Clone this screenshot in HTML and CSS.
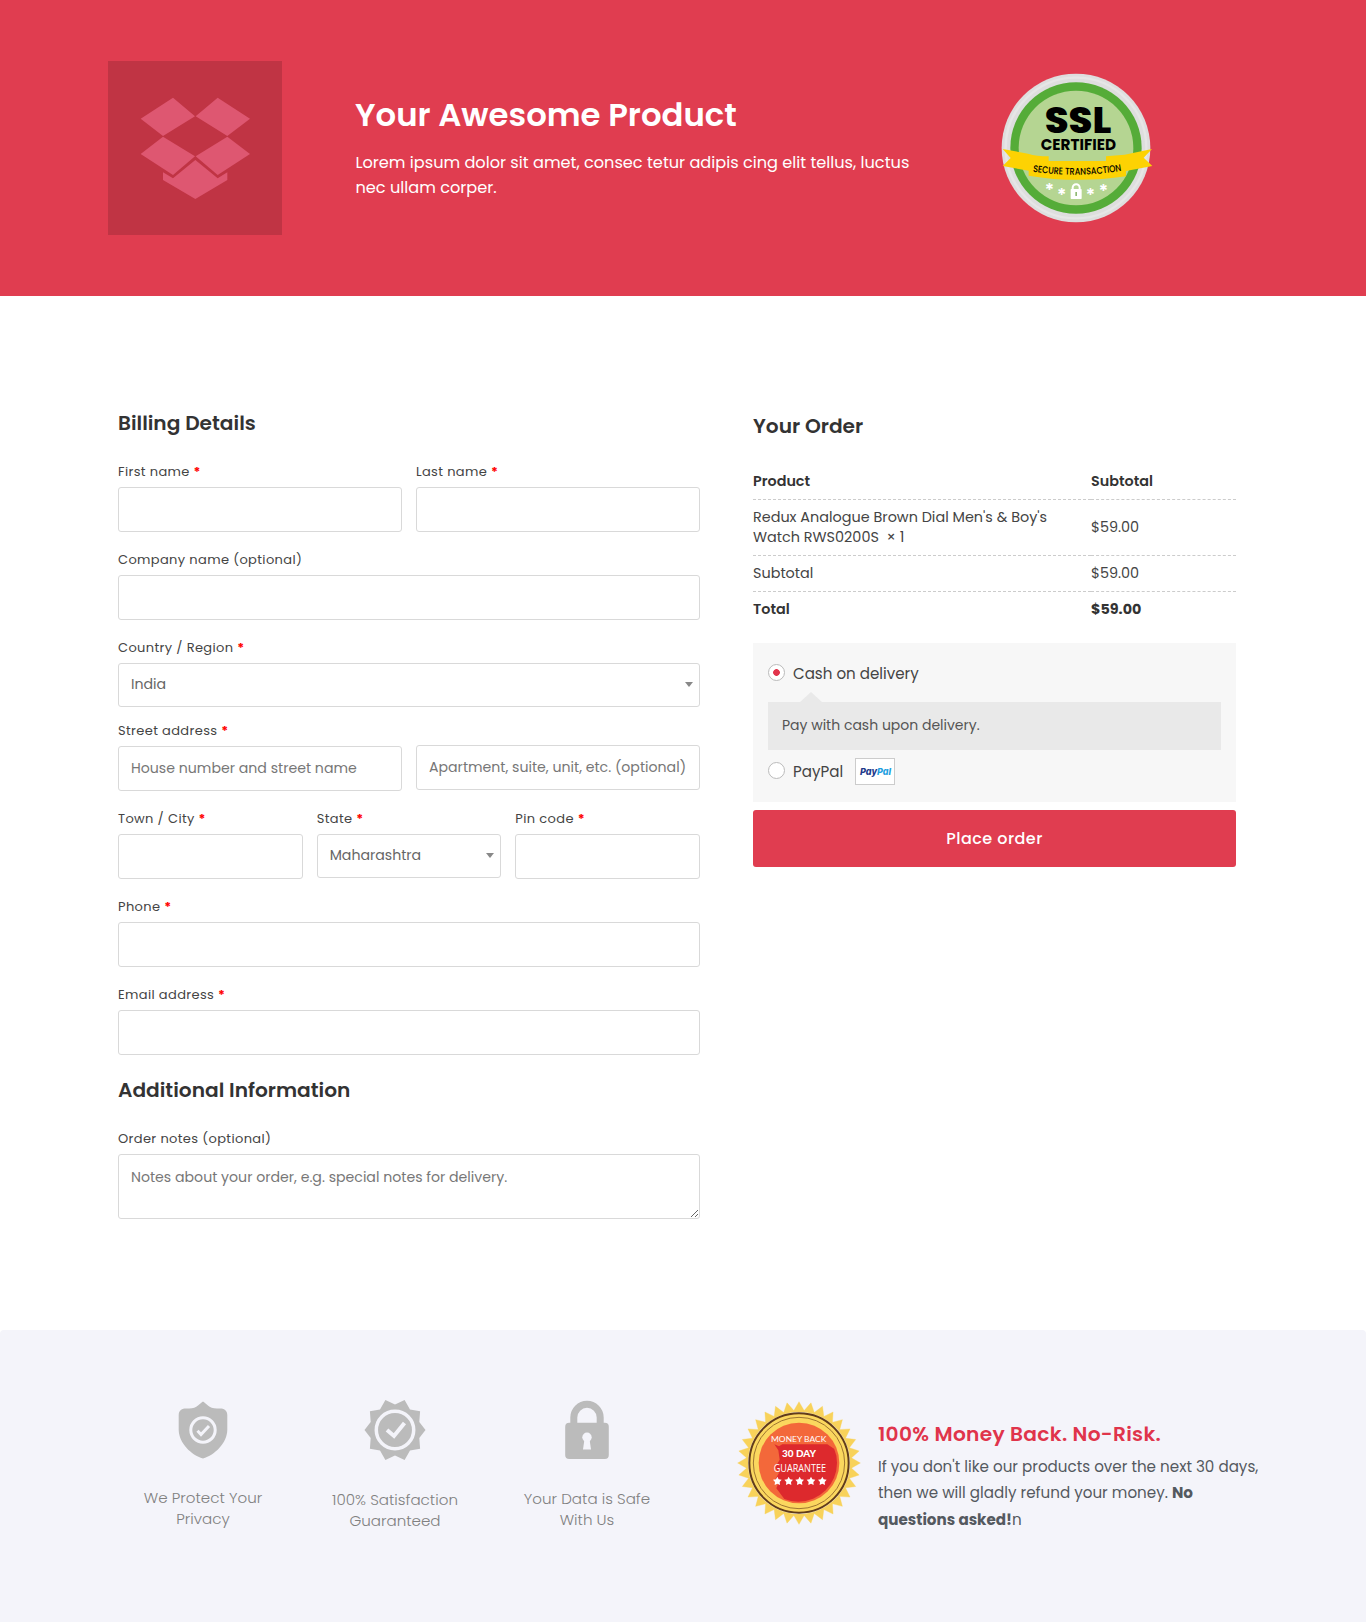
FILE: index.html
```html
<!DOCTYPE html>
<html lang="en">
<head>
<meta charset="utf-8">
<title>Checkout</title>
<link rel="stylesheet" href="styles.css">
</head>
<body>
<header class="hero">
  <svg class="product-logo" viewBox="0 0 522 522" aria-label="Product logo">
    <rect width="522" height="522" fill="#c03444"/>
    <g fill="#de5771">
      <path d="M195 110 261 166 165 225 98 173Z"/>
      <path d="M329 110 426 173 358 225 263 166Z"/>
      <path d="M165 227 261 286 195 342 98 279Z"/>
      <path d="M358 227 426 279 329 342 263 286Z"/>
      <path d="M262 297 329 352 358 334V357L262 414 165 357V334L195 352Z"/>
    </g>
  </svg>
  <div class="hero-text">
    <h1>Your Awesome Product</h1>
    <p>Lorem ipsum dolor sit amet, consec tetur adipis cing elit tellus, luctus<br>nec ullam corper.</p>
  </div>
  <svg class="ssl" viewBox="0 0 600 570" aria-label="SSL certified">
    <circle cx="288" cy="279" r="223" fill="#dedede"/>
    <circle cx="288" cy="279" r="211" fill="none" stroke="#e6e6e6" stroke-width="7"/>
    <circle cx="288" cy="279" r="197" fill="#55ac38"/>
    <circle cx="288" cy="279" r="172" fill="#b5d592"/>
    <path d="M68 282 144 296Q170 304 206 304V318H378V304L434 299 516 282 491 308 517 333 438 348V364Q288 386 146 362V347L68 333 92 309Z" fill="#fdd203"/>
    <path id="ribbon" d="M158 350Q292 370 428 347" fill="none"/>
    <text class="ssl-big" x="194" y="234" textLength="200" lengthAdjust="spacingAndGlyphs">SSL</text>
    <text class="ssl-mid" x="182" y="285" textLength="226" lengthAdjust="spacingAndGlyphs">CERTIFIED</text>
    <text class="ssl-small"><textPath href="#ribbon" textLength="268" lengthAdjust="spacingAndGlyphs">SECURE TRANSACTION</textPath></text>
    <g class="stars-white">
      <text x="208" y="406">✱</text><text x="245" y="419">✱</text><text x="331" y="419">✱</text><text x="370" y="408">✱</text>
    </g>
    <path d="M278 404V398A10.500 10.500 0 0 1 299 398V404" fill="none" stroke="#fff" stroke-width="6"/>
    <rect x="272" y="402" width="33" height="30" rx="2" fill="#fff"/>
    <path d="M288.500 411V423" stroke="#8fb974" stroke-width="5"/>
  </svg>
</header>

<main class="checkout">
  <form class="billing">
    <h2 class="t-billing">Billing Details</h2>
    <div class="row">
      <label class="field"><span class="label">First name <b>*</b></span><input type="text"></label>
      <label class="field"><span class="label">Last name <b>*</b></span><input type="text"></label>
    </div>
    <div class="row">
      <label class="field"><span class="label">Company name (optional)</span><input type="text"></label>
    </div>
    <div class="row row-country">
      <label class="field"><span class="label">Country / Region <b>*</b></span><span class="select"><select><option>India</option></select></span></label>
    </div>
    <div class="row">
      <label class="field"><span class="label">Street address <b>*</b></span><input type="text" placeholder="House number and street name"></label>
      <label class="field unlabelled"><input type="text" placeholder="Apartment, suite, unit, etc. (optional)"></label>
    </div>
    <div class="row">
      <label class="field"><span class="label">Town / City <b>*</b></span><input type="text"></label>
      <label class="field"><span class="label">State <b>*</b></span><span class="select"><select><option>Maharashtra</option></select></span></label>
      <label class="field"><span class="label">Pin code <b>*</b></span><input type="text"></label>
    </div>
    <div class="row">
      <label class="field"><span class="label">Phone <b>*</b></span><input type="text"></label>
    </div>
    <div class="row">
      <label class="field"><span class="label">Email address <b>*</b></span><input type="text"></label>
    </div>
    <h2 class="t-additional">Additional Information</h2>
    <label class="field"><span class="label">Order notes (optional)</span><textarea placeholder="Notes about your order, e.g. special notes for delivery."></textarea></label>
  </form>

  <section class="order">
    <h2>Your Order</h2>
    <table>
      <thead><tr><th>Product</th><th>Subtotal</th></tr></thead>
      <tbody>
        <tr class="item"><td>Redux Analogue Brown Dial Men's &amp; Boy's<br>Watch RWS0200S&nbsp; × 1</td><td>$59.00</td></tr>
        <tr><td>Subtotal</td><td>$59.00</td></tr>
        <tr class="total"><th>Total</th><th class="sum">$59.00</th></tr>
      </tbody>
    </table>
    <div class="payment">
      <div class="method"><span class="radio on"></span><span class="name">Cash on delivery</span></div>
      <div class="bubble">Pay with cash upon delivery.</div>
      <div class="method"><span class="radio"></span><span class="name">PayPal</span>
        <svg class="paypal" viewBox="0 0 40 27"><rect x=".5" y=".5" width="39" height="26" fill="#fff" stroke="#ccc"/><text x="5" y="17.300" textLength="17" lengthAdjust="spacingAndGlyphs" fill="#21398a">Pay</text><text x="22" y="17.300" textLength="14" lengthAdjust="spacingAndGlyphs" fill="#1f9fe0">Pal</text></svg>
      </div>
    </div>
    <button class="place" type="button">Place order</button>
  </section>
</main>

<footer class="trust">
  <div class="assurance">
    <svg viewBox="-32 -32 64 64" fill="#bbb">
      <path d="M0-28.500C3-27 6-21 15-21.500 20-22 24.300-20.500 24.300-15V0C24 13 12 25 0 28.500-12 25-24 13-24.300 0V-15C-24.300-20.500-20-22-15-21.500-6-21-3-27 0-28.500Z"/>
      <circle r="12.200" fill="none" stroke="#f4f4fa" stroke-width="3"/>
      <path d="M-5.500 .8-2 4.500 6-4" fill="none" stroke="#f4f4fa" stroke-width="3"/>
    </svg>
    <p>We Protect Your<br>Privacy</p>
  </div>
  <div class="assurance second">
    <svg viewBox="-32 -32 64 64" fill="#bbb">
      <path d="M30.500 0 24.300 7.900 25.100 18.700 15 20.600 9.600 30 0 25.500-9.600 30-15 20.600-25.100 18.700-24.300 7.900-30.500 0-24.300-7.900-25.100-18.700-15-20.600-9.600-30 0-25.500 9.600-30 15-20.600 25.100-18.700 24.300-7.900Z"/>
      <circle r="18.700" fill="none" stroke="#f4f4fa" stroke-width="3.500"/>
      <path d="M-8 0-1 6 9.500-7" fill="none" stroke="#f4f4fa" stroke-width="4"/>
    </svg>
    <p>100% Satisfaction<br>Guaranteed</p>
  </div>
  <div class="assurance third">
    <svg viewBox="-32 -32 64 64" fill="#bbb">
      <path d="M-13.200-5V-12.500A13.200 13.200 0 0 1 13.200-12.500V-5" fill="none" stroke="#bbb" stroke-width="7"/>
      <rect x="-21.800" y="-7.300" width="43.600" height="36.300" rx="4"/>
      <circle cy="7.300" r="4.700" fill="#f4f4fa"/><path d="M-2.500 9H2.500L4 19.500H-4Z" fill="#f4f4fa"/>
    </svg>
    <p>Your Data is Safe<br>With Us</p>
  </div>
  <svg class="seal" viewBox="-186 -186 372 372" aria-label="30 day money back guarantee">
    <defs>
      <path id="teeth" d="M0-184 18-153H-18ZM184 0 153 18V-18ZM0 184-18 153H18ZM-184 0-153-18V18Z"/>
      <clipPath id="disc"><circle cx="-2" r="116"/></clipPath>
      <path id="star" d="M0-13 4-5 13-4 7 3 8 12 0 8-8 12-7 3-13-4-4-5Z"/>
    </defs>
    <g fill="#f8d25a" stroke="#f8d25a" stroke-linejoin="round">
      <use href="#teeth"/><use href="#teeth" transform="rotate(11.250)"/><use href="#teeth" transform="rotate(22.500)"/><use href="#teeth" transform="rotate(33.750)"/>
      <use href="#teeth" transform="rotate(45)"/><use href="#teeth" transform="rotate(56.250)"/><use href="#teeth" transform="rotate(67.500)"/><use href="#teeth" transform="rotate(78.750)"/>
    </g>
    <circle r="149" fill="#fbd75e" stroke="#623c19" stroke-width="6"/>
    <circle r="137" fill="none" stroke="#8a6128" stroke-width="2.500"/>
    <circle r="121" fill="#f3683a"/>
    <path clip-path="url(#disc)" d="M-74-56-60-50-50-56H85L140-20V140H-20L-68 76-62 60-72 50-60 30-72 14-58-10-62-38Z" fill="#dd292d"/>
    <g class="seal-text">
      <text x="-84" y="-63" font-size="21" textLength="166" lengthAdjust="spacingAndGlyphs">MONEY BACK</text>
      <text x="-51" y="-17" font-size="30" font-weight="900" textLength="102" lengthAdjust="spacingAndGlyphs">30 DAY</text>
      <text x="-76" y="27" class="narrow" textLength="157" lengthAdjust="spacingAndGlyphs">GUARANTEE</text>
    </g>
    <g fill="#fff"><use href="#star" x="-65" y="54"/><use href="#star" x="-31" y="54"/><use href="#star" x="2" y="54"/><use href="#star" x="36" y="54"/><use href="#star" x="70" y="54"/></g>
  </svg>
  <div class="guarantee">
    <h3>100% Money Back. No-Risk.</h3>
    <p>If you don't like our products over the next 30 days,<br>then we will gladly refund your money. <b>No</b><br><b>questions asked!</b>n</p>
  </div>
</footer>
</body>
</html>
```
FILE: styles.css
```css
* { box-sizing: border-box; }
body {
  margin: 0;
  background: #fff;
  color: #444;
  font-family: Poppins, Inter, "Open Sans", sans-serif;
}
h1, h2, h3, p { margin: 0; }

/* Hero */
.hero {
  display: flex;
  align-items: flex-start;
  height: 296px;
  padding: 55px 108px 0;
  background: #e03d50;
  color: #fff;
}
.product-logo { width: 174px; height: 174px; margin-top: 6px; flex: none; }
.hero-text { width: 560px; margin: 40px 65px 0 73px; flex: none; white-space: nowrap; }
.hero h1 { font-size: 32.3px; line-height: 40px; font-weight: 600; }
.hero p { margin-top: 16px; padding-left: .5px; font-size: 16.17px; line-height: 24.6px; }
.ssl { width: 200px; height: 190px; flex: none; }
.ssl-big { font-size: 108px; font-weight: 800; }
.ssl-mid { font-size: 46px; font-weight: 700; }
.ssl-small { font-size: 29px; font-weight: 500; }
.stars-white { fill: #fff; font: 29px "DejaVu Sans", sans-serif; text-anchor: middle; }

/* Checkout */
.checkout { display: flex; align-items: flex-start; gap: 53px; height: 1034px; padding: 112px 0 0 118px; }
h2 { font-size: 20.17px; line-height: 30px; font-weight: 600; color: #333; }
.billing { width: 582px; }
.t-billing { margin-bottom: 24px; }
.t-additional { margin: 2px 0 24px; }
.row { display: flex; gap: 14px; height: 88px; }
.row-country { height: 83px; }
.field { flex: 1 1 0; min-width: 0; display: flex; flex-direction: column; }
.label { margin-bottom: 5px; font-size: 13px; line-height: 20px; letter-spacing: .36px; color: #444; white-space: nowrap; }
.label b { color: #f00; }
.unlabelled { padding-top: 24px; }
input, select, textarea {
  width: 100%;
  border: 1px solid #d9d9d9;
  border-radius: 3px;
  background: #fff;
  color: #666;
  font: 14.13px/20px Poppins, Inter, "Open Sans", sans-serif;
  padding: 0 12px;
}
input { height: 45px; }
::placeholder { color: #777; opacity: 1; }
.select { position: relative; display: block; }
select { display: block; height: 44px; appearance: none; padding-bottom: 2px; }
.select::after {
  content: "";
  position: absolute;
  right: 7px;
  top: 19px;
  border: 4px solid transparent;
  border-top: 5px solid #888;
  border-bottom: 0;
}
textarea { display: block; height: 65px; padding: 12px; resize: vertical; }

/* Order summary */
.order { width: 483px; padding-top: 3px; }
table { width: 100%; margin-top: 23px; border-spacing: 0; table-layout: fixed; font-size: 14.4px; line-height: 19px; }
th, td { padding: 8px 0; border-bottom: 1px dashed #ccc; text-align: left; }
th { font-weight: 600; color: #333; font-size: 14.35px; }
th:first-child { width: 338px; }
.sum { font-weight: 700; }
.item td { line-height: 19.5px; }
.total th { border-bottom: 0; }
.payment { height: 159px; margin-top: 16px; padding: 15px 15px 0; background: #f7f7f7; }
.method { display: flex; align-items: center; height: 28px; font-size: 15.1px; }
.name { padding-top: 2px; }
.radio { width: 17px; height: 17px; margin-right: 8px; border: 1px solid #bbb; border-radius: 50%; background: #fff; }
.radio.on { background: radial-gradient(circle, #e2354c 3px, #fff 3.7px); }
.bubble {
  position: relative;
  height: 48px;
  margin: 16px 0 6px;
  padding: 0 14px;
  background: #e9e9e9;
  color: #555;
  font-size: 14px;
  line-height: 47px;
}
.bubble::before {
  content: "";
  position: absolute;
  left: 32px;
  top: -10px;
  border: 11px solid transparent;
  border-bottom: 10px solid #e9e9e9;
  border-top: 0;
}
.paypal { width: 40px; height: 27px; margin: 2px 0 0 12px; font: italic 800 9.5px Inter, sans-serif; }
.place {
  display: block;
  width: 100%;
  height: 57px;
  margin-top: 8px;
  border: 0;
  border-radius: 3px;
  background: #e03d50;
  color: #fff;
  font: 500 16px Poppins, Inter, "Open Sans", sans-serif;
  letter-spacing: .46px;
}

/* Trust strip */
.trust { display: flex; align-items: flex-start; height: 292px; padding: 68px 0 0 107px; background: #f4f4fa; border-radius: 4px 4px 0 0; }
.assurance { width: 192px; text-align: center; color: #808080; font-size: 15.1px; line-height: 21px; font-weight: 300; }
.assurance svg { display: block; width: 64px; height: 64px; margin: 0 auto 25px; }
.assurance.second svg { margin-bottom: 27px; }
.assurance.third svg { margin-bottom: 26px; }
.seal { width: 124px; height: 124px; margin: 3px 0 0 53.5px; flex: none; }
.seal-text { fill: #fff; font-family: Lato, sans-serif; }
.narrow { font: 400 35px "Open Sans", sans-serif; }
.guarantee { margin: 21px 0 0 17.5px; white-space: nowrap; }
.guarantee h3 { font-size: 20.2px; line-height: 30px; font-weight: 600; letter-spacing: .3px; color: #e0344b; }
.guarantee p { margin-top: 4.7px; font-size: 15.15px; line-height: 26.8px; color: #54595f; }
.guarantee b { font-weight: 700; }
```
